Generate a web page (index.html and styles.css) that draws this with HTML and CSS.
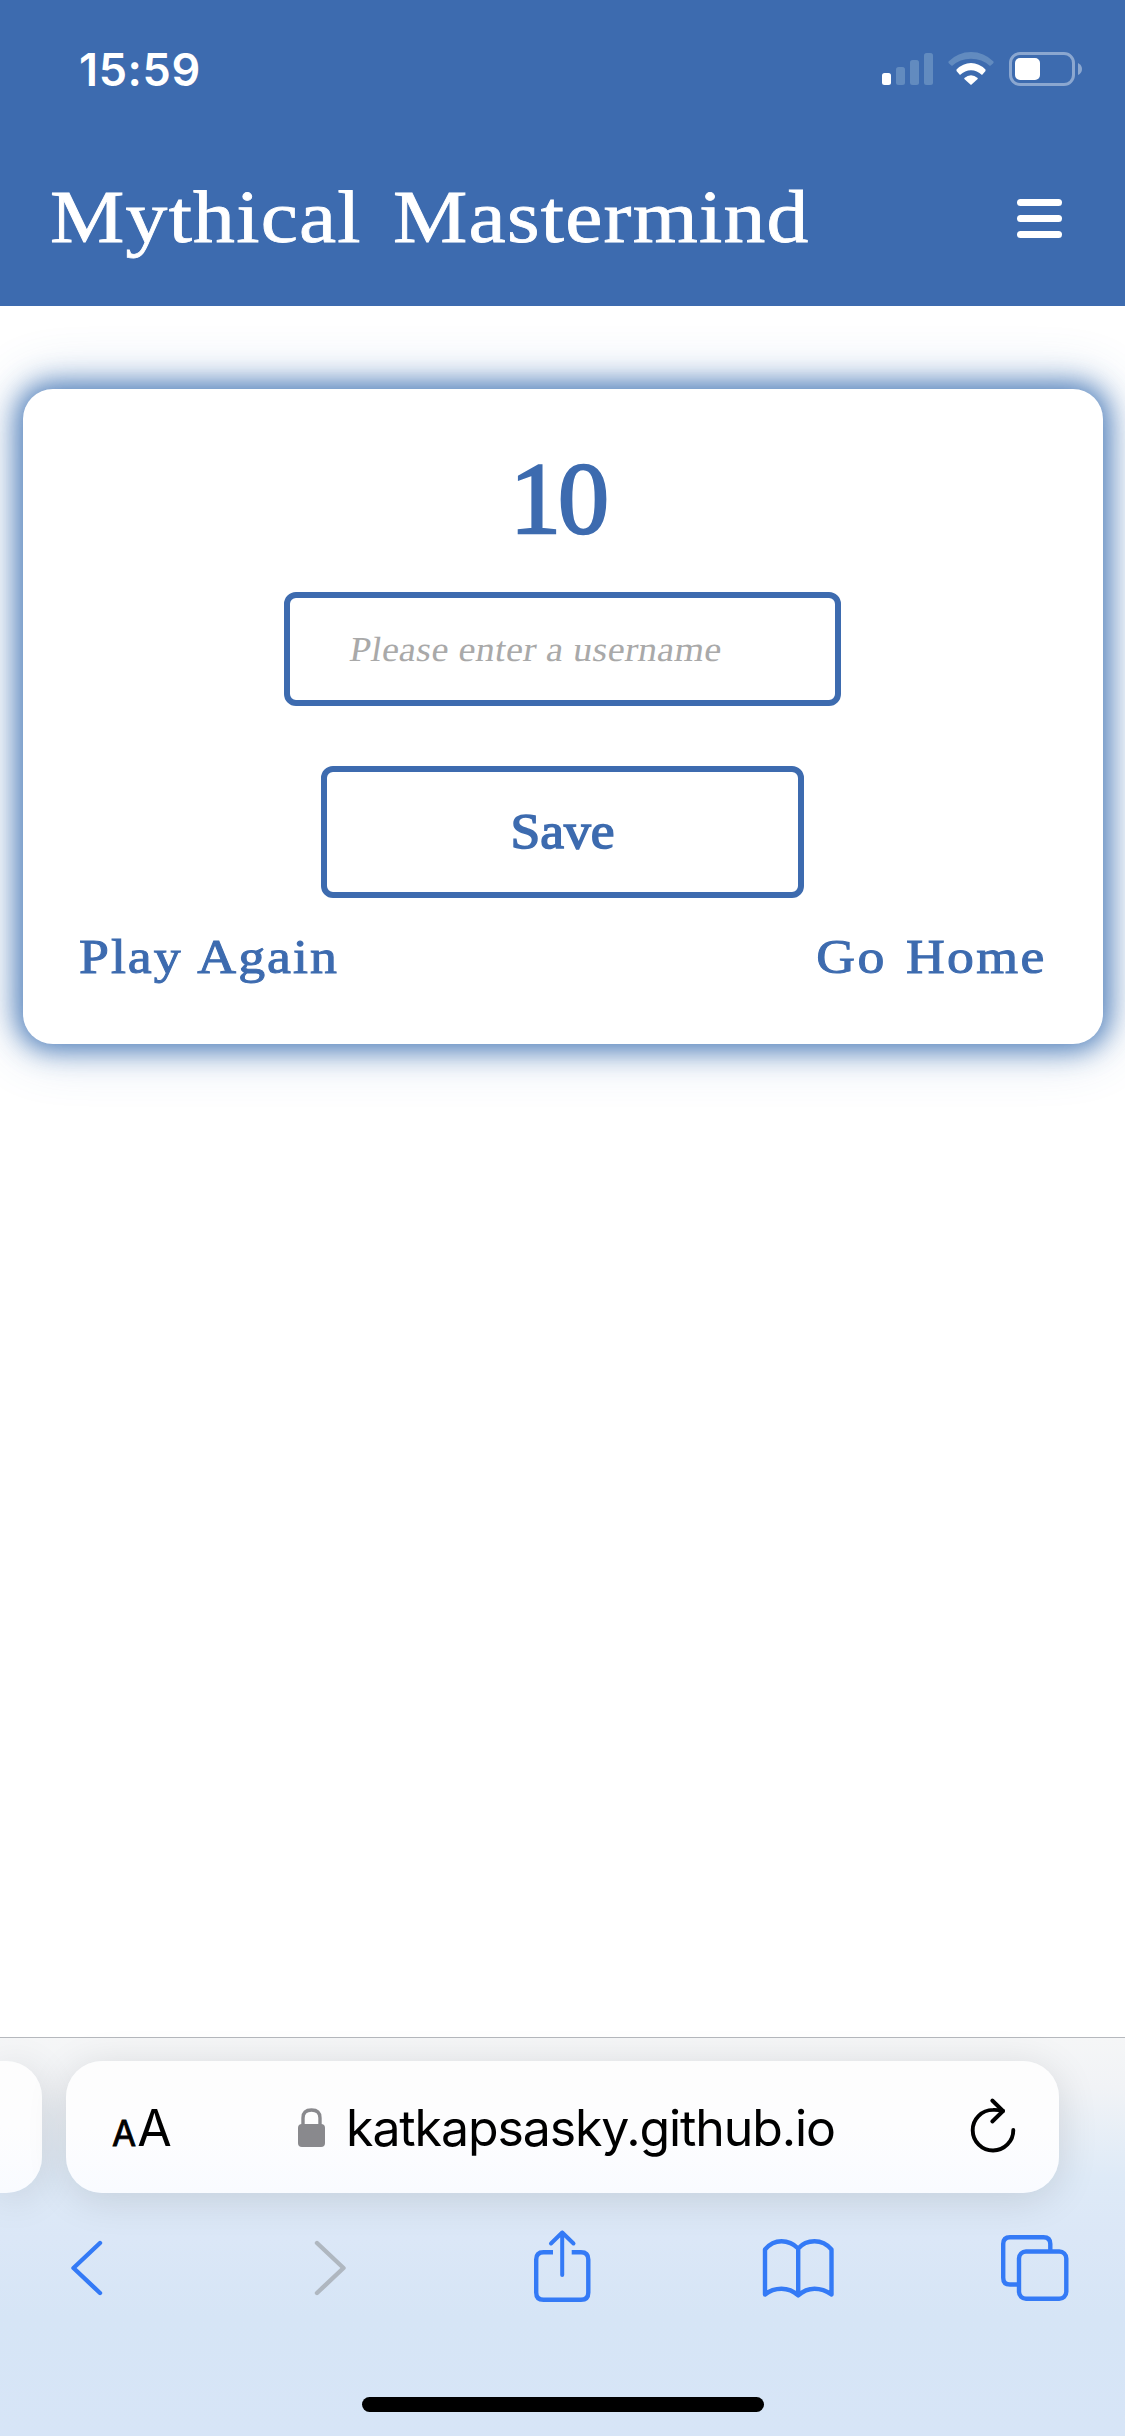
FILE: index.html
```html
<!DOCTYPE html>
<html lang="en">
<head>
<meta charset="utf-8">
<title>Mythical Mastermind</title>
<link rel="stylesheet" href="styles.css">
</head>
<body>
<div class="screen">
  <header class="top">
    <div class="status">
      <span class="time">15:59</span>
      <svg class="indicators" width="206" height="40" viewBox="880 49 206 40">
        <rect x="882" y="73" width="9" height="12" rx="2.5" fill="#fff"/>
        <g fill="#628bbf">
          <rect x="896" y="67" width="9" height="18" rx="2.5"/>
          <rect x="910" y="60" width="9" height="25" rx="2.5"/>
          <rect x="924" y="53" width="9" height="32" rx="2.5"/>
        </g>
        <path d="M948.5 61.5Q958 52 971 52T993.500 61.500Q994 62.500 993 63.500L990 66Q982 58.800 971 58.800T952 66L949 63.500Q948 62.500 948.500 61.500Z" fill="#628bbf"/>
        <path d="M956.500 69.500Q963 63 971 63T985.500 69.500V71L982 75Q977 70.300 971 70.300T960 75L956.500 71Z" fill="#fff"/>
        <path d="M964.300 78Q971 72.300 977.700 78V79L971 85L964.300 79Z" fill="#fff"/>
        <rect x="1010.500" y="53.500" width="63" height="31" rx="9.500" fill="none" stroke="#8ba7d0" stroke-width="3"/>
        <rect x="1015" y="58" width="25" height="22" rx="5" fill="#fff"/>
        <path d="M1078 63Q1082 65 1082 69T1078 75Z" fill="#8ba7d0"/>
      </svg>
    </div>
    <div class="nav">
      <h1 class="brand">Mythical Mastermind</h1>
      <button class="menu" aria-label="Menu"><i class="bar"></i><i class="bar"></i><i class="bar"></i></button>
    </div>
  </header>

  <main class="page">
    <section class="card">
      <div class="score">10</div>
      <div class="field"><span class="placeholder">Please enter a username</span></div>
      <button class="save"><span class="save-label">Save</span></button>
      <div class="links">
        <a class="play">Play Again</a>
        <a class="home">Go Home</a>
      </div>
    </section>
  </main>

  <footer class="browser">
    <div class="tabs">
      <div class="tab-prev"></div>
      <div class="address">
        <span class="reader"><span class="small-a">A</span><span class="big-a">A</span></span>
        <span class="site">
          <svg width="28" height="40" viewBox="298 2107 28 40">
            <path d="M303 2124V2117Q303 2109 311.500 2109T320 2117V2124" fill="none" stroke="#89898d" stroke-width="3.400"/>
            <rect x="298" y="2123" width="27" height="23" rx="4" fill="#89898d"/>
          </svg>
          <span class="url">katkapsasky.github.io</span>
        </span>
        <svg width="50" height="64" viewBox="968 2095 50 64" fill="none" stroke="#000" stroke-width="3.900" stroke-linecap="round" stroke-linejoin="round">
          <path d="M1013.300 2130A20.300 20.300 0 1 1 993 2109.900Q998 2109.700 1003 2111"/>
          <path d="M992.300 2100.500L1003 2111L992.300 2121.500"/>
        </svg>
      </div>
    </div>
    <div class="tools">
      <svg class="tool" width="1125" height="90" viewBox="0 2221 1125 90" fill="none" stroke="#347af6" stroke-width="4.400" stroke-linecap="round" stroke-linejoin="round">
        <path d="M100 2243L73.500 2268L100 2293"/>
        <path d="M317 2243L343.500 2268L317 2293" stroke="#afb7c0"/>
        <path d="M553 2252.300H543.500Q536.200 2252.300 536.200 2259.600V2292.500Q536.200 2299.800 543.500 2299.800H581Q588.300 2299.800 588.300 2292.500V2259.600Q588.300 2252.300 581 2252.300H571.700" stroke-linecap="butt"/>
        <path d="M562.200 2275V2232.500M551 2243.500L562.200 2232.500L573.500 2243.500" stroke-width="4"/>
        <path d="M798.200 2248.500Q791 2241.300 781.500 2241.300T765 2249.500V2294.500Q772 2288.700 781.500 2288.700T798.200 2295.500Q805.500 2288.700 814.500 2288.700T831.500 2294.500V2249.500Q824.500 2241.300 814.500 2241.300T798.200 2248.500V2295"/>
        <rect x="1019" y="2251.500" width="47.300" height="47.300" rx="7"/>
        <path d="M1050.300 2251V2244Q1050.300 2237.200 1043.500 2237.200H1010Q1003.200 2237.200 1003.200 2244V2277.700Q1003.200 2284.500 1010 2284.500H1018.500" stroke-linecap="butt"/>
      </svg>
    </div>
    <div class="home-bar"></div>
  </footer>
</div>
</body>
</html>
```
FILE: styles.css
```css
* { box-sizing: border-box; }

body { margin: 0; background: #fff; }

button {
  margin: 0;
  padding: 0;
  border: 0;
  background: none;
}

.screen {
  display: flex;
  flex-direction: column;
  width: 1125px;
  height: 2436px;
  overflow: hidden;
  font-family: "Liberation Serif", serif;
  color: #3d6baf;
}

.top {
  height: 306px;
  background: #3d6baf;
  color: #fff;
}

.status {
  display: flex;
  justify-content: space-between;
  align-items: center;
  height: 138px;
  padding: 0 39px 0 79px;
}

.time {
  font: 600 45px/1 Inter, sans-serif;
  letter-spacing: 0.6px;
}

.nav {
  display: flex;
  justify-content: space-between;
  align-items: center;
  height: 160px;
  padding: 0 63px 0 50px;
}

.brand {
  margin: 0 0 2px;
  font-size: 74px;
  font-weight: 400;
  line-height: 84px;
  letter-spacing: 1.1px;
  word-spacing: 8px;
  white-space: nowrap;
  transform: scaleX(1.13);
  transform-origin: left;
  -webkit-text-stroke: 0.8px #fff;
}

.menu {
  display: flex;
  flex-direction: column;
  gap: 9px;
  width: 45px;
}

.bar {
  height: 7px;
  border-radius: 3.5px;
  background: #fff;
}

.page {
  flex: 1;
  padding: 83px 22px 0 23px;
}

.card {
  display: flex;
  flex-direction: column;
  align-items: center;
  height: 655px;
  padding: 50px 56px 0 55px;
  border-radius: 30px;
  background: #fff;
  box-shadow: 0 0 26px 6px rgba(61, 113, 179, 0.85), 0 0 54px 6px rgba(61, 113, 179, 0.3);
}

.score {
  height: 153px;
  margin-right: 9px;
  font-size: 102px;
  line-height: 120px;
  letter-spacing: -3px;
  -webkit-text-stroke: 2.5px #3d6baf;
}

.field,
.save {
  display: flex;
  align-items: center;
  border: 6px solid #3d6baf;
  border-radius: 12px;
}

.field {
  width: 557px;
  height: 114px;
  padding: 2px 0 0 60px;
}

.placeholder {
  font-size: 35px;
  letter-spacing: 0.4px;
  color: #a9a9a9;
  white-space: nowrap;
  transform: skewX(-9deg) scaleX(1.08);
  transform-origin: left;
}

.save {
  justify-content: center;
  width: 483px;
  height: 132px;
  margin-top: 60px;
  color: #3d6baf;
  font: 400 50px/1 "Liberation Serif", serif;
  -webkit-text-stroke: 1.5px #3d6baf;
}

.save-label {
  margin-top: -2px;
  transform: scaleX(1.07);
}

.links {
  display: flex;
  justify-content: space-between;
  align-self: stretch;
  margin-top: 31px;
  padding-left: 1px;
  font-size: 48px;
  line-height: 56px;
  -webkit-text-stroke: 1px #3d6baf;
}

.play {
  letter-spacing: 1.8px;
  word-spacing: 2px;
  transform: scaleX(1.12);
  transform-origin: left;
}

.home {
  letter-spacing: 2.1px;
  word-spacing: 3px;
  transform: scaleX(1.12);
  transform-origin: right;
}

.browser {
  display: flex;
  flex-direction: column;
  align-items: center;
  height: 399px;
  border-top: 1px solid #b5b8bd;
  background: linear-gradient(#f5f6f7 0, #f1f3f6 50px, #deeaf7 140px, #dbe7f7 200px, #d6e5f6 280px, #d7e5f7 100%);
}

.tabs {
  display: flex;
  gap: 24px;
  align-self: stretch;
  padding-top: 23px;
}

.tab-prev,
.address {
  height: 132px;
  background: linear-gradient(#fdfdfd, #fdfdfe 50%, #f9fbff);
  box-shadow: 0 6px 40px rgba(0, 0, 0, 0.12);
}

.tab-prev {
  width: 42px;
  border-radius: 0 36px 36px 0;
}

.address {
  display: flex;
  justify-content: space-between;
  align-items: center;
  width: 993px;
  padding: 0 41px 0 46px;
  border-radius: 36px;
  color: #000;
  font-family: Inter, sans-serif;
}

.reader {
  display: flex;
  align-items: baseline;
  gap: 1px;
  width: 62px;
  padding-top: 2px;
}

.small-a {
  font-size: 35px;
  -webkit-text-stroke: 0.8px #000;
}

.big-a { font-size: 50px; }

.site {
  display: flex;
  align-items: center;
  gap: 20px;
  margin-right: 9px;
  padding-top: 1px;
}

.url {
  font-size: 50px;
  line-height: 60px;
  letter-spacing: -1.1px;
}

.tools {
  height: 90px;
  margin-top: 28px;
}

.tool { display: block; }

.home-bar {
  width: 402px;
  height: 15px;
  margin-top: 86px;
  border-radius: 8px;
  background: #000;
}
```
